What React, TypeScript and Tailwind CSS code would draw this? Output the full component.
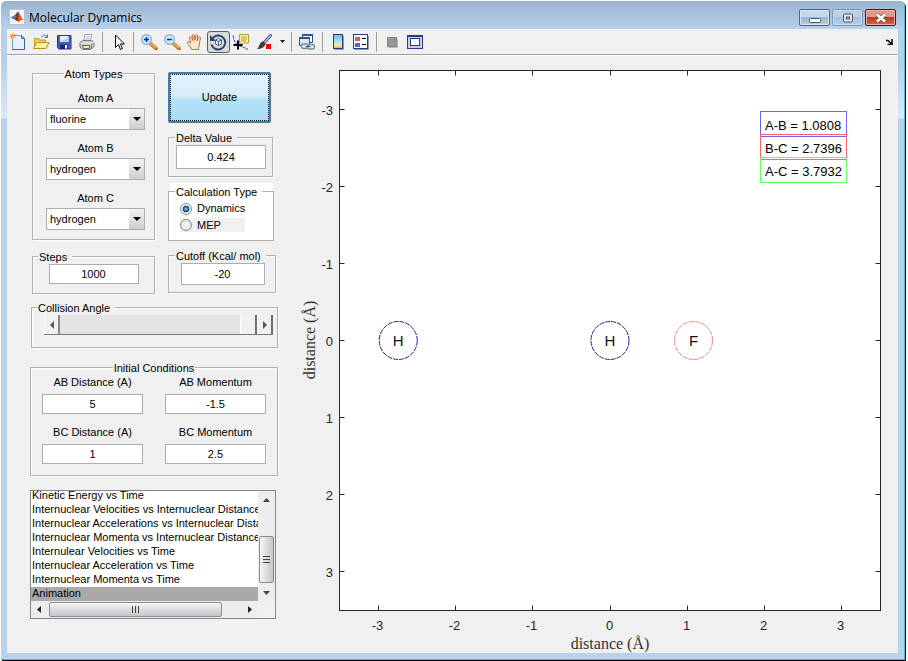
import { useState } from "react";
import type { ReactNode } from "react";

const plots = [
  "Kinetic Energy vs Time",
  "Internuclear Velocities vs Internuclear Distance",
  "Internuclear Accelerations vs Internuclear Distance",
  "Internuclear Momenta vs Internuclear Distance",
  "Internulear Velocities vs Time",
  "Internuclear Acceleration vs Time",
  "Internuclear Momenta vs Time",
  "Animation",
];

const elements = ["hydrogen", "fluorine", "deuterium", "chlorine"];

// Toolbar icons

const Icon = ({ children }: { children: ReactNode }) => (
  <svg viewBox="0 0 18 18" className="size-[18px] shrink-0" aria-hidden="true">
    {children}
  </svg>
);

const NewIcon = () => (
  <Icon>
    <path d="M3.500 2.500h9l3 3v11h-12z" fill="#e6f1fd" stroke="#7a9cc8" />
    <path d="M15.500 6v10.500h-12" fill="none" stroke="#3d62a0" />
    <path d="M12.500 2.500v3h3z" fill="#c6daf2" stroke="#4a6ea9" />
    <path d="M3.500 0.500v6M0.500 3.500h6M1.500 1.500l4 4M5.500 1.500l-4 4" stroke="#e8834a" />
    <rect x="3" y="3" width="1.500" height="1.500" fill="#fff0c0" />
  </Icon>
);

const OpenIcon = () => (
  <Icon>
    <path d="M2.500 15.500v-10h4l1 1.500h6v8.500z" fill="#f3d35c" stroke="#c19a24" />
    <path d="M1.500 15.500l3-6h12.500l-3 6z" fill="#fdf09a" stroke="#b98f1c" />
    <path d="M9.500 4.500c1.500-3 4-3 5.500-.5M15.500 1.500v3h-3" fill="none" stroke="#4c6aa8" />
  </Icon>
);

const SaveIcon = () => (
  <Icon>
    <path d="M2.500 2.500h13.500v13.500h-12l-1.500-1.500z" fill="#4060c8" stroke="#26358c" />
    <rect x="5" y="3" width="8.500" height="6" fill="#e8f0ff" />
    <path d="M5 9l8.500-5v5z" fill="#b6cdf6" />
    <rect x="5" y="11.500" width="8" height="4.500" fill="#20286a" />
    <rect x="10" y="12" width="2" height="3.500" fill="#fff" />
  </Icon>
);

const PrintIcon = () => (
  <Icon>
    <path d="M5.500 8l1.500-6.500h6.500l-1 6.500" fill="#fff" stroke="#9aa4b4" />
    <path d="M7.500 4h4.500M7 6h4.500" stroke="#9ab4d8" />
    <path d="M2 9.500l3-2h8.500l2.500 2v4l-3 3h-8.500l-2.500-2.500z" fill="#c9c9c9" stroke="#77777c" />
    <path d="M2.500 10h10.500l2.500-.5" fill="none" stroke="#f4f4f4" />
    <path d="M4.500 12.500h7v3h-6z" fill="#edf0b4" stroke="#64666a" />
    <path d="M13.500 11v5" stroke="#77777c" />
  </Icon>
);

const CursorIcon = () => (
  <Icon>
    <path
      d="M6.500 2v12.500l3-3 2 5 2-1-2-4.500h4z"
      fill="#fff"
      stroke="#000"
      strokeLinejoin="round"
    />
  </Icon>
);

const ZoomIcon = ({ plus }: { plus?: boolean }) => (
  <Icon>
    <path d="M10.500 10.500l5.500 5" stroke="#a0651c" strokeWidth="3.500" strokeLinecap="round" />
    <path d="M11 10.500l4.500 4.200" stroke="#f0b050" strokeWidth="2" strokeLinecap="round" />
    <circle cx="6.500" cy="6.500" r="4.800" fill="#c9f0fa" stroke="#8db2dc" strokeWidth="1.400" />
    <path d="M4 6.500h5" stroke="#20308c" strokeWidth="1.600" />
    {plus && <path d="M6.500 4v5" stroke="#20308c" strokeWidth="1.600" />}
  </Icon>
);

const HandIcon = () => (
  <Icon>
    <path
      d="M5.500 16.500c-.5-2-1.500-3-3-5-1.500-1.500-1.500-2.500-.5-3s2 .5 2.800 1.700L3.500 5c-.4-1.500 1.300-2 1.900-.7l1.300 3.200-.4-4.800c0-1.500 1.900-1.500 2.100 0l.5 4.600.9-4.800c.3-1.300 2-1 1.900.4l-.6 5 1.600-3.500c.7-1.200 2.200-.6 1.800.8-.8 2.800-.9 4.800-1.200 6.800-.2 1.800-.8 2.500-.8 4.500z"
      fill="#ffe6cc"
      stroke="#b4622c"
      strokeWidth="0.9"
    />
  </Icon>
);

const RotateIcon = () => (
  <Icon>
    <path d="M3.500 5.500a7 7 0 1 1-1 6" fill="none" stroke="#30456e" strokeWidth="2" />
    <path d="M1 2v6h6z" fill="#30456e" />
    <path d="M6.500 7l3-1.500 3 1.500v4l-3 1.500-3-1.500zM6.500 7l3 1.500 3-1.500M9.500 8.500v4" fill="#e6effa" stroke="#4e6690" />
  </Icon>
);

const DataTipIcon = () => (
  <Icon>
    <path d="M1 2.500c1 5 2 8 6 10s6 2 9 4" fill="none" stroke="#2e2ee0" strokeDasharray="3 1" />
    <path d="M7.500 1.500h9v8.500h-4.500l-3 2v-2h-1.500z" fill="#fbf29a" stroke="#b39b38" />
    <path d="M9 4h6M9 6h6M9 8h5" stroke="#a89c58" />
    <path d="M6 7.500v9M1.500 12h9" stroke="#000" strokeWidth="2" />
  </Icon>
);

const BrushIcon = () => (
  <Icon>
    <path d="M15.500 2.500l-7 8" stroke="#3b4f88" strokeWidth="3" strokeLinecap="round" />
    <path d="M15.500 2.500l-6 7" stroke="#b9c9ea" strokeWidth="1.200" strokeLinecap="round" />
    <path d="M8.500 8.500l2 2c-.5 3-3 5.500-8.500 5.500 2-1.500 2-4 3.500-6 1-1.200 2-1.500 3-1.500z" fill="#3c3c40" />
    <rect x="11" y="11" width="5" height="5" fill="#f00" />
  </Icon>
);

const LinkIcon = () => (
  <Icon>
    <path d="M4.500 1.500h10v8h-10z" fill="#fff" stroke="#31508c" />
    <path d="M4 2h11" stroke="#31508c" strokeWidth="2" />
    <path d="M1.500 4.500h10v8h-10z" fill="#dce8f8" stroke="#31508c" />
    <path d="M1 5h11" stroke="#31508c" strokeWidth="2" />
    <rect x="3.500" y="11" width="7" height="4.500" rx="2.200" fill="#e8eef2" stroke="#7a8c98" strokeWidth="1.300" />
    <rect x="9.500" y="11.500" width="7" height="4.500" rx="2.200" fill="#e8eef2" stroke="#7a8c98" strokeWidth="1.300" />
    <path d="M7.500 13.500h5" stroke="#4c5c68" strokeWidth="1.300" />
  </Icon>
);

const ColorbarIcon = () => (
  <Icon>
    <defs>
      <linearGradient id="bar" x1="0" y1="0" x2="0" y2="1">
        <stop offset="0" stopColor="#8ca8f0" />
        <stop offset="0.500" stopColor="#9ce8ec" />
        <stop offset="0.750" stopColor="#f6eaa0" />
        <stop offset="1" stopColor="#f0a088" />
      </linearGradient>
    </defs>
    <rect x="4.500" y="1.500" width="9" height="14" fill="url(#bar)" stroke="#26407c" />
    <path d="M14.500 3v13.500h-9" fill="none" stroke="#9098a8" />
  </Icon>
);

const LegendIcon = () => (
  <Icon>
    <rect x="1.500" y="1.500" width="14" height="14" fill="#fff" stroke="#26407c" />
    <path d="M16.500 3v13.500h-14" fill="none" stroke="#9098a8" />
    <rect x="3" y="4" width="5" height="4" fill="#e05858" />
    <rect x="3" y="10" width="5" height="4" fill="#5c5ce0" />
    <path d="M10 5.500h4M10 11.500h4" stroke="#000" />
  </Icon>
);

const HidePlotIcon = () => (
  <Icon>
    <rect x="4.500" y="4.500" width="9" height="9" fill="#979797" stroke="#8a8a8a" />
    <path d="M14.500 6v8.500h-9" fill="none" stroke="#b8b8b8" />
  </Icon>
);

const ShowPlotIcon = () => (
  <Icon>
    <rect x="1.500" y="2.500" width="15" height="13" fill="#c5d0e6" stroke="#26407c" />
    <path d="M1 3h16" stroke="#26407c" strokeWidth="2" />
    <rect x="4.500" y="5.500" width="9" height="7" fill="#fff" stroke="#26407c" />
  </Icon>
);

type Tool = { label: string; icon: ReactNode; pressed?: boolean; menu?: boolean };

const toolGroups: Tool[][] = [
  [
    { label: "New Figure", icon: <NewIcon /> },
    { label: "Open File", icon: <OpenIcon /> },
    { label: "Save Figure", icon: <SaveIcon /> },
    { label: "Print Figure", icon: <PrintIcon /> },
  ],
  [{ label: "Edit Plot", icon: <CursorIcon /> }],
  [
    { label: "Zoom In", icon: <ZoomIcon plus /> },
    { label: "Zoom Out", icon: <ZoomIcon /> },
    { label: "Pan", icon: <HandIcon /> },
    { label: "Rotate 3D", icon: <RotateIcon />, pressed: true },
    { label: "Data Cursor", icon: <DataTipIcon /> },
    { label: "Brush", icon: <BrushIcon />, menu: true },
  ],
  [{ label: "Link Plot", icon: <LinkIcon /> }],
  [
    { label: "Insert Colorbar", icon: <ColorbarIcon /> },
    { label: "Insert Legend", icon: <LegendIcon /> },
  ],
  [
    { label: "Hide Plot Tools", icon: <HidePlotIcon /> },
    { label: "Show Plot Tools", icon: <ShowPlotIcon /> },
  ],
];

const Toolbar = () => (
  <div className="flex h-[26px] items-center border-b border-[#a0a0a0] bg-[#f0f0f0] shadow-[0_1px_0_#fff]">
    {toolGroups.map((group, i) => (
      <div key={i} className="flex items-center">
        {i > 0 && <div className="mr-1 ml-[3px] h-5 w-px bg-[#9c9c9c]" />}
        {group.map((tool) => (
          <div key={tool.label} className="flex">
            <button
              aria-label={tool.label}
              className={
                tool.pressed
                  ? "flex h-[22px] w-[23px] items-center rounded-[3px] border border-[#5c5c5c] bg-[#dadada] pl-px"
                  : "flex h-[22px] w-[23px] items-center pl-0.5"
              }
            >
              {tool.icon}
            </button>
            {tool.menu && (
              <button aria-label="Brush colors" className="flex w-3 items-center justify-center">
                <svg viewBox="0 0 5 3" className="h-[3px] w-[5px]">
                  <path d="M0 0h5L2.500 3z" fill="#222" />
                </svg>
              </button>
            )}
          </div>
        ))}
      </div>
    ))}
    <button aria-label="Dock figure" className="mr-[5px] ml-auto">
      <svg viewBox="0 0 7 6" className="h-[6px] w-[7px]">
        <path d="M0 1.500h2l3 3M6 0v5.500H1.500" fill="none" stroke="#000" strokeWidth="1.500" />
      </svg>
    </button>
  </div>
);

const TitleBar = () => (
  <header className="flex h-7 items-start px-0.5 pt-2">
    <svg viewBox="0 0 16 16" className="size-4" aria-hidden="true">
      <rect x="0.500" y="0.500" width="15" height="15" fill="#f4f6f8" stroke="#b8c4d0" />
      <path d="M1.500 8.500l4-2 2 2-2.500 2z" fill="#3c78b8" />
      <path d="M5.500 6.500C7.500 5 8 2.500 9 2.500L7.500 8.500z" fill="#1f4c88" />
      <path d="M9 2.500c1.500 1 3 6 5.500 9-2-1-3-.5-5 2-.8-1.500-2-2.500-4-3 2-1.500 2.500-5 3.500-8z" fill="#d85a20" />
      <path d="M9 2.500c.8 3 .5 7-.5 9.500l-3-1.500c2-1.500 2.500-5 3.500-8z" fill="#8c2a14" />
    </svg>
    <h1 className="ml-1 font-['Open_Sans',sans-serif] text-[12px] leading-[18px] text-black">
      Molecular Dynamics
    </h1>
    <div className="ml-auto flex gap-0.5">
      <button
        aria-label="Minimize"
        className="flex h-[17px] w-[31px] items-center justify-center rounded-[2px] border border-[#53657c] bg-[linear-gradient(#c6d8ec_45%,#9cb6d3_50%,#b4cde8)] shadow-[inset_0_0_0_1px_#d8e6f4]"
      >
        <svg viewBox="0 0 12 10" className="h-[10px] w-3">
          <rect x="0.500" y="5.500" width="11" height="4" rx="1" fill="#fff" stroke="#535666" />
        </svg>
      </button>
      <button
        aria-label="Maximize"
        className="flex h-[17px] w-[31px] items-center justify-center rounded-[2px] border border-[#8098b4] bg-[linear-gradient(#bcd0e8_45%,#a8c1de_50%,#b4cde8)] shadow-[inset_0_0_0_1px_#cadbee]"
      >
        <svg viewBox="0 0 12 10" className="h-[10px] w-3">
          <rect x="1.500" y="1" width="9" height="8" rx="1" fill="#dde3ea" stroke="#535666" />
          <rect x="4.500" y="4" width="3" height="2" fill="#a8c1de" stroke="#535666" />
        </svg>
      </button>
      <button
        aria-label="Close"
        className="flex h-[17px] w-[31px] items-center justify-center rounded-[2px] border border-[#501818] bg-[linear-gradient(#e09a8e_45%,#b93a22_50%,#cf6a50)] shadow-[inset_0_0_0_1px_#eab0a4]"
      >
        <svg viewBox="0 0 12 10" className="h-[10px] w-3">
          <path d="M2 1.500l8 7M10 1.500l-8 7" stroke="#535666" strokeWidth="4" />
          <path d="M2 1.500l8 7M10 1.500l-8 7" stroke="#fff" strokeWidth="2.600" />
        </svg>
      </button>
    </div>
  </header>
);

// Controls

const frame = "border border-[#b0b0b0] shadow-[inset_1px_1px_0_#fff,1px_1px_0_#fff]";

const Legend = ({ children }: { children: ReactNode }) => (
  <legend className="ml-[5px] h-4 bg-[#f0f0f0] pr-[5px] pl-px leading-[18px]">{children}</legend>
);

const CenterLegend = ({ children }: { children: ReactNode }) => (
  <legend className="mx-auto h-4 bg-[#f0f0f0] px-px leading-[18px]">{children}</legend>
);

const field = "block border border-[#abadb3] bg-white text-center";

const AtomSelect = ({ name, initial }: { name: string; initial: string }) => (
  <label className="flex w-[99px] flex-col">
    <span className="h-[18px] text-center leading-4">{name}</span>
    <span className="relative">
      <select
        defaultValue={initial}
        className="block h-[22px] w-full appearance-none border border-[#abadb3] bg-white pl-[3px]"
      >
        {elements.map((e) => (
          <option key={e}>{e}</option>
        ))}
      </select>
      <span className="pointer-events-none absolute inset-y-px right-px flex w-[15px] items-center justify-center bg-linear-to-b from-[#f2f2f2] to-[#cfcfcf]">
        <svg viewBox="0 0 8 4" className="h-1 w-2">
          <path d="M0 0h8L4 4z" fill="#000" />
        </svg>
      </span>
    </span>
  </label>
);

const Condition = ({ label, initial }: { label: string; initial: string }) => (
  <label className="block">
    <span className="mb-[5px] block text-center leading-[14px]">{label}</span>
    <input defaultValue={initial} className={`${field} h-5 w-full`} />
  </label>
);

const CalcType = () => {
  const [type, setType] = useState("Dynamics");
  const radio =
    "size-3 appearance-none rounded-full border border-[#8e8f8f] bg-[radial-gradient(#fff,#d4d4d4)] checked:bg-[radial-gradient(#8fd4f4_0,#1a6a9c_32%,#123c5c_42%,#e8eef2_52%)]";

  return (
    <fieldset className="h-[58px] w-[105px] border border-[#b0b0b0] bg-white pl-px">
      <legend className="h-4 w-[103px] bg-white bg-[linear-gradient(#b0b0b0,#b0b0b0)] bg-[length:100%_1px] bg-[position:0_8px] bg-no-repeat pl-[5px] leading-[18px]">
        <span className="inline-block h-4 bg-white pr-[5px] pl-px">Calculation Type</span>
      </legend>
      <div className="flex flex-col pl-2.5">
        {["Dynamics", "MEP"].map((t) => (
          <label
            key={t}
            className={
              t === "MEP"
                ? "flex h-[14px] w-[65px] items-center gap-[5px] bg-[#f0f0f0]"
                : "flex h-[19px] w-[82px] items-center gap-[5px]"
            }
          >
            <input
              type="radio"
              name="calc"
              checked={type === t}
              onChange={() => setType(t)}
              className={radio}
            />
            {t}
          </label>
        ))}
      </div>
    </fieldset>
  );
};

const AngleSlider = () => (
  <div className="mr-1 ml-3 flex h-5 border-b border-[#7c7c7c]">
    <button
      aria-label="Decrease angle"
      className="flex w-4 items-center justify-center border-r-2 border-[#8a8a8a] border-l border-l-white"
    >
      <svg viewBox="0 0 4 8" className="h-2 w-1">
        <path d="M4 0v8L0 4z" fill="#555" />
      </svg>
    </button>
    <input
      type="range"
      aria-label="Collision Angle"
      min={0}
      max={180}
      defaultValue={180}
      className="h-[19px] min-w-0 flex-1 appearance-none bg-[#e4e4e4] [&::-webkit-slider-thumb]:h-[19px] [&::-webkit-slider-thumb]:w-[17px] [&::-webkit-slider-thumb]:appearance-none [&::-webkit-slider-thumb]:border-r-2 [&::-webkit-slider-thumb]:border-l [&::-webkit-slider-thumb]:border-r-[#6e6e6e] [&::-webkit-slider-thumb]:border-l-white [&::-webkit-slider-thumb]:bg-[#f0f0f0]"
    />
    <button
      aria-label="Increase angle"
      className="flex w-4 items-center justify-center border-r-2 border-[#6e6e6e] border-l border-l-white"
    >
      <svg viewBox="0 0 4 8" className="h-2 w-1">
        <path d="M0 0v8l4-4z" fill="#555" />
      </svg>
    </button>
  </div>
);

const PlotList = () => (
  <div className="mt-3.5 w-[246px] border border-[#828790] bg-[#f0f0f0]">
    <div className="flex">
      <select
        size={8}
        aria-label="Plot"
        defaultValue="Animation"
        className="block h-[110px] min-w-0 flex-1 appearance-none overflow-hidden bg-white p-0 [scrollbar-width:none]"
      >
        {plots.map((p) => (
          <option
            key={p}
            className="h-[14px] min-h-0 overflow-hidden p-0 pl-px leading-[17px] whitespace-nowrap text-black checked:bg-[#a9a9a9] checked:bg-[linear-gradient(#a9a9a9,#a9a9a9)] checked:text-black"
          >
            {p}
          </option>
        ))}
      </select>
      <div className="flex w-[17px] flex-col items-center bg-[#ededed]">
        <svg viewBox="0 0 7 4" className="mt-[7px] h-1 w-[7px]">
          <path d="M0 4h7L3.500 0z" fill="#444" />
        </svg>
        <div className="mt-[34px] flex h-[47px] w-[15px] items-center justify-center rounded-[2px] border border-[#8c8c8c] bg-linear-to-r from-[#f6f6f6] to-[#c4c5ca]">
          <svg viewBox="0 0 7 8" className="h-2 w-[7px]">
            <path d="M0 .5h7M0 3.500h7M0 6.500h7" stroke="#444" />
          </svg>
        </div>
        <svg viewBox="0 0 7 4" className="mt-2 h-1 w-[7px]">
          <path d="M0 0h7L3.500 4z" fill="#444" />
        </svg>
      </div>
    </div>
    <div className="mr-[17px] flex h-[17px] items-center bg-[#ededed]">
      <svg viewBox="0 0 4 7" className="ml-1.5 h-[7px] w-1">
        <path d="M4 0v7L0 3.500z" fill="#222" />
      </svg>
      <div className="ml-2 flex h-[15px] w-[173px] items-center justify-center rounded-[2px] border border-[#8c8c8c] bg-linear-to-b from-[#f6f6f6] to-[#c4c5ca]">
        <svg viewBox="0 0 8 7" className="h-[7px] w-2">
          <path d="M.5 0v7M3.500 0v7M6.500 0v7" stroke="#444" />
        </svg>
      </div>
      <svg viewBox="0 0 4 7" className="mr-1.5 ml-auto h-[7px] w-1">
        <path d="M0 0v7l4-3.500z" fill="#222" />
      </svg>
    </div>
  </div>
);

const ControlPanel = () => (
  <form className="w-[248px] shrink-0" onSubmit={(e) => e.preventDefault()}>
    <div className="flex gap-[13px] pl-0.5">
      <div className="flex w-[123px] flex-col gap-2">
        <fieldset className={`${frame} h-[175px]`}>
          <CenterLegend>Atom Types</CenterLegend>
          <div className="flex flex-col items-center gap-2.5 pt-[9px] pl-1">
            <AtomSelect name="Atom A" initial="fluorine" />
            <AtomSelect name="Atom B" initial="hydrogen" />
            <AtomSelect name="Atom C" initial="hydrogen" />
          </div>
        </fieldset>
        <fieldset className={`${frame} h-[46px]`}>
          <Legend>Steps</Legend>
          <input aria-label="Steps" defaultValue="1000" className={`${field} mx-auto h-5 w-[90px]`} />
        </fieldset>
      </div>
      <div className="flex flex-col gap-1.5 pt-[7px]">
        <button className="h-[51px] w-[103px] rounded-[2px] border-2 border-[#3c7fb1] bg-[linear-gradient(#e8f4fb,#d2ebf9_50%,#b6e2fa_52%,#a8dbf5)] outline-1 -outline-offset-3 outline-black outline-dotted">
          Update
        </button>
        <fieldset className={`${frame} h-12 w-[105px] pl-px`}>
          <Legend>Delta Value</Legend>
          <input aria-label="Delta Value" defaultValue="0.424" className={`${field} mx-auto h-6 w-[90px]`} />
        </fieldset>
        <CalcType />
        <fieldset className={`${frame} h-[46px] w-[108px] pl-px`}>
          <Legend>Cutoff (Kcal/ mol)</Legend>
          <input aria-label="Cutoff" defaultValue="-20" className={`${field} mx-auto h-[22px] w-[84px]`} />
        </fieldset>
      </div>
    </div>
    <fieldset className={`${frame} mt-[5px] ml-px h-[49px]`}>
      <Legend>Collision Angle</Legend>
      <AngleSlider />
    </fieldset>
    <fieldset className={`${frame} mt-[11px] h-[117px]`}>
      <CenterLegend>Initial Conditions</CenterLegend>
      <div className="grid grid-cols-2 gap-x-[22px] gap-y-[11px] px-[11px]">
        <Condition label="AB Distance (A)" initial="5" />
        <Condition label="AB Momentum" initial="-1.5" />
        <Condition label="BC Distance (A)" initial="1" />
        <Condition label="BC Momentum" initial="2.5" />
      </div>
    </fieldset>
    <PlotList />
  </form>
);

// Animation axes

const ticks = [-3, -2, -1, 0, 1, 2, 3];
const left = 49.5;
const top = 15.5;
const width = 541;
const height = 540;
const toX = (v: number) => left + ((v + 3.5) * width) / 7;
const toY = (v: number) => top + ((v + 3.5) * height) / 7;
const snap = (v: number) => Math.floor(v) + 0.5;

const atoms = [
  { symbol: "H", x: -2.7396, color: "#2020a0" },
  { symbol: "H", x: 0, color: "#2020a0" },
  { symbol: "F", x: 1.0808, color: "#ff8080" },
];

const distances = [
  { text: "A-B = 1.0808", color: "#6464ff" },
  { text: "B-C = 2.7396", color: "#ff6464" },
  { text: "A-C = 3.7932", color: "#64ff64" },
];

const AnimationAxes = () => (
  <svg
    viewBox="0 0 608 598"
    role="img"
    aria-label="Atom positions"
    className="h-auto min-w-0 flex-1 self-start font-['Liberation_Sans',sans-serif] text-[13px]"
  >
    <rect x={left} y={top} width={width} height={height} fill="#fff" stroke="#262626" />
    {ticks.map((t) => {
      const x = snap(toX(t));
      const y = snap(toY(t));
      return (
        <g key={t} fill="#262626">
          <path
            d={`M${x} ${top}v5M${x} ${top + height}v-5M${left} ${y}h5M${left + width} ${y}h-5`}
            stroke="#262626"
          />
          <text x={x - 1} y="575" textAnchor="middle">
            {t}
          </text>
          <text x="43" y={y + 5} textAnchor="end">
            {t}
          </text>
        </g>
      );
    })}
    {atoms.map((a) => (
      <g key={a.x}>
        <circle
          cx={toX(a.x)}
          cy={toY(0)}
          r="19"
          fill="none"
          stroke={a.color}
          strokeDasharray="5 1"
        />
        <text x={toX(a.x)} y={toY(0) + 5} textAnchor="middle" fontSize="15" fill="#111">
          {a.symbol}
        </text>
      </g>
    ))}
    {distances.map((d, i) => (
      <g key={d.text}>
        <rect x="470.500" y={56.5 + i * 23} width="86" height="25" fill="none" stroke={d.color} />
        <text x="475" y={75 + i * 23} fill="#000">
          {d.text}
        </text>
      </g>
    ))}
    <g fontFamily="'Liberation Serif', serif" fontSize="16" fill="#333" textAnchor="middle">
      <text x="320" y="594">
        distance (Å)
      </text>
      <text transform="translate(25 285) rotate(-90)">distance (Å)</text>
    </g>
  </svg>
);

export default function App() {
  return (
    <div className="flex min-h-screen bg-white pt-px pr-[3px] pb-px pl-px font-['Liberation_Sans',Arial,sans-serif] text-[11px] text-black">
      <div className="flex flex-1 flex-col rounded-t-[5px] border-r border-b border-[#3cc0dc] bg-[linear-gradient(#99b4d1,#b9d1ea_28px,#b4cfea_60px,#dce9f7_117px,#b9d1ea_118px)] px-1.5 pb-1.5 shadow-[1px_1px_0_#000]">
        <TitleBar />
        <div className="flex flex-1 flex-col bg-[#f0f0f0]">
          <Toolbar />
          <main className="flex gap-3 pl-[23px]">
            <div className="pt-2.5">
              <ControlPanel />
            </div>
            <AnimationAxes />
          </main>
        </div>
      </div>
    </div>
  );
}
